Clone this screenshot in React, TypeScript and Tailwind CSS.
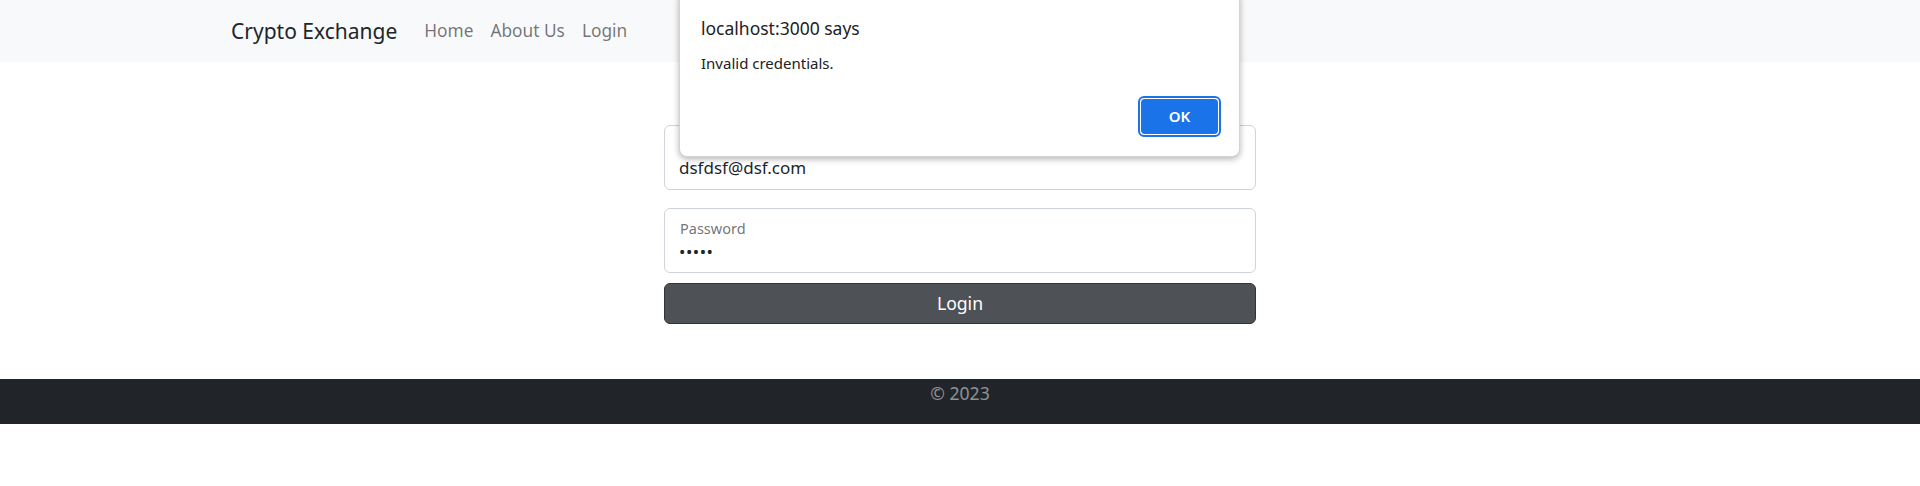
import React from 'react';

const FONT = '"Noto Sans", "Open Sans", Arial, sans-serif';

function Navbar() {
  return (
    <nav className="h-[62px] bg-[#f8f9fa] flex items-center pl-[231px]">
      <a href="#" className="text-[21px] text-[#212529] leading-none">Crypto Exchange</a>
      <div className="ml-[27px] flex items-center gap-[17px] text-[17.3px] text-black/55 leading-none">
        <a href="#">Home</a>
        <a href="#">About Us</a>
        <a href="#">Login</a>
      </div>
    </nav>
  );
}

function LoginForm() {
  return (
    <div className="w-[592px] mx-auto pt-[63px]">
      <div className="relative h-[65px] rounded-[6px] border border-[#ced4da] bg-white px-[14px]">
        <label className="absolute left-[15px] top-[12px] text-[14.5px] text-[#212529]/65 leading-none">Email address</label>
        <div className="pt-[29px] text-[17px] text-[#212529] leading-[26px]">dsfdsf@dsf.com</div>
      </div>

      <div className="relative mt-[18px] h-[65px] rounded-[6px] border border-[#ced4da] bg-white px-[14px]">
        <label className="absolute left-[15px] top-[12px] text-[14.5px] text-[#212529]/65 leading-none">Password</label>
        <div className="pt-[30px] text-[17px] text-[#212529] leading-[26px] tracking-[0.5px]">•••••</div>
      </div>

      <button className="mt-[10px] w-full h-[41px] rounded-[6px] border border-[#303437] bg-[#4e5256] text-white text-[17.6px] leading-none">
        Login
      </button>
    </div>
  );
}

function AlertDialog() {
  return (
    <div className="absolute left-[679px] top-[-8px] w-[561px] h-[165px] rounded-[8px] border border-[#d3d3d3] bg-white shadow-[0_2px_6px_rgba(0,0,0,0.3)]">
      <div className="pl-[21px] pt-[27px] text-[17.5px] text-[#202124] leading-none">localhost:3000 says</div>
      <div className="pl-[21px] pt-[18px] text-[15px] text-[#202124] leading-none">Invalid credentials.</div>
      <div className="absolute right-[18px] bottom-[19px] w-[83px] h-[41px] rounded-[6px] border-2 border-[#1a73e8] p-[1px]">
        <div className="w-full h-full rounded-[4px] bg-[#1a73e8] flex items-center justify-center text-white text-[15px] font-semibold">
          OK
        </div>
      </div>
    </div>
  );
}

export default function App() {
  return (
    <div className="relative w-full h-[486px] bg-white overflow-hidden" style={{ fontFamily: FONT }}>
      <Navbar />
      <LoginForm />
      <footer className="mt-[55px] h-[45px] bg-[#212529] text-center text-[17.6px] text-white/50 leading-none pt-[6px]">
        © 2023
      </footer>
      <AlertDialog />
    </div>
  );
}
